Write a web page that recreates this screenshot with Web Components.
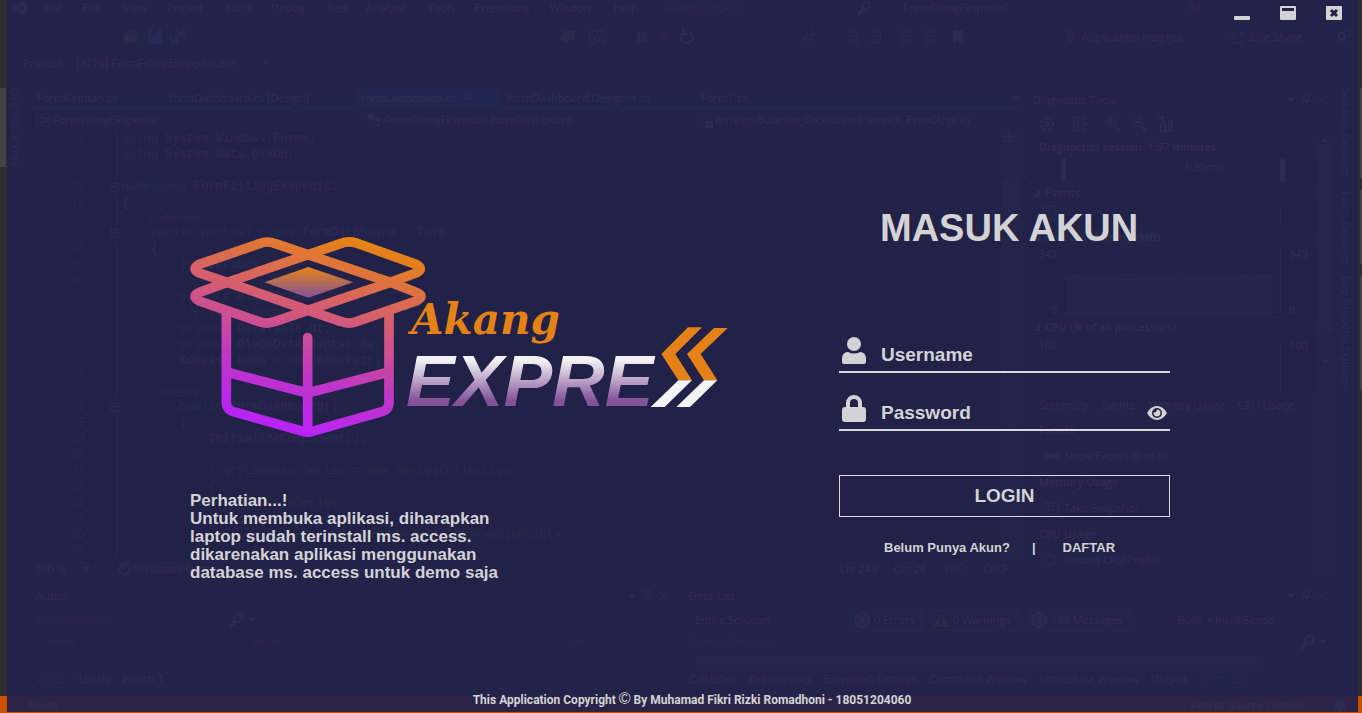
<!DOCTYPE html>
<html lang="id">
<head>
<meta charset="utf-8">
<title>Akang Express - Masuk Akun</title>
<style>
  html, body { margin: 0; height: 100%; background: #2d2d30; }
  body { overflow: hidden; font-family: "Liberation Sans", Arial, sans-serif; }
</style>
</head>
<body>
<desktop-scene>
  <ide-backdrop slot="back"></ide-backdrop>
  <login-window slot="front"></login-window>
</desktop-scene>

<script>
const define = (name, html, setup) => customElements.define(name, class extends HTMLElement {
  constructor() {
    super();
    this.attachShadow({ mode: "open" }).innerHTML = html;
    if (setup) setup.call(this, this.shadowRoot);
  }
});

/* Stacks the editor and the login window in one grid cell */
define("desktop-scene", `
<style>
  :host { display: grid; height: 100vh; grid-template: minmax(0, 1fr) / minmax(0, 1fr); overflow: hidden; }
  ::slotted(*) { grid-area: 1 / 1; }
  ::slotted([slot=front]) { margin: 0 4px 1px 7px; }
</style>
<slot name="back"></slot><slot name="front"></slot>`);

/* ---------- editor behind the window ---------- */
define("ide-rail", `
<style>
  :host { display: flex; flex-direction: column; gap: 12px; width: 24px; color: #d0d0d0; font-size: 12px; }
  ::slotted(span) { writing-mode: vertical-rl; border-left: 6px solid #434346; padding-left: 1px; height: var(--tab, 79px); line-height: 17px; white-space: nowrap; font-size: 11px; }
  :host([side=right]) ::slotted(span) { border-left: 0; border-right: 2px solid #434346; padding: 0 5px 0 0; }
</style><slot></slot>`);

define("ide-glyph", `
<style>
  :host { display: inline-block; width: 16px; height: 16px; flex: none; color: #c8c8c8; }
  svg { display: block; width: 100%; height: 100%; fill: none; stroke: currentColor; stroke-width: 2; }
</style><svg viewBox="0 0 16 16" aria-hidden="true"></svg>`, function (root) {
  const shapes = {
    open: '<path d="M1 5h5l2 2h6v7H1z" fill="#d7ac6a" stroke="none"/><path d="M4 5c1-4 5-4 7-1M11 1v4H7" stroke="#3a8fd8"/>',
    save: '<path d="M1 1h14v14H1z" fill="#55aaff" stroke="none"/><path d="M5 1h6v5H5z" fill="#2d2d30" stroke="none"/>',
    saveall: '<path d="M8 0h8v8H8zM1 7h8v8H1z" fill="#55aaff" stroke="none"/><path d="M10 0h3v3h-3zM3 7h3v3H3z" fill="#2d2d30" stroke="none"/>',
    logo: '<path d="M1 4l3 3 7-6 4 2v10l-4 2-7-6-3 3zM11 5L7 8l4 3z" fill="currentColor" fill-rule="evenodd" stroke="none"/>',
    search: '<circle cx="10" cy="6" r="4"/><path d="M7 9l-5 6" stroke-width="3"/>',
    folder: '<path d="M3 2h12v9H3z" fill="#d7ac6a" stroke="none"/><circle cx="5" cy="10" r="3"/>',
    home: '<path d="M1 2h14v12H1zM4 9l4-4 4 4M6 8v4h4V8" stroke-width="1"/>',
    pause: '<path d="M4 3v10M10 3v10" stroke="#55aaff" stroke-width="4"/>',
    stop: '<path d="M4 4h8v8H4z" fill="#a05050" stroke="none"/>',
    restart: '<path d="M5 3a6 6 0 1 0 6 0M4 0v5h5"/>',
    lines: '<path d="M2 3h12M5 7h9M5 11h9M2 14h12" stroke-width="1"/>',
    hash: '<path d="M6 1L3 15M12 1L9 15M4 5h11M1 10h12" stroke-width="1"/>',
    mark: '<path d="M3 1h10v14l-5-4-5 4z" fill="currentColor" stroke="none"/>',
    bulb: '<path d="M8 1a5 5 0 0 0-2 9v3h4v-3a5 5 0 0 0-2-9z" fill="#9b59d0" stroke="none"/>',
    share: '<path d="M5 5H2v9h10v-3M5 11c0-5 3-6 8-6M10 2l4 3-4 4" stroke-width="1"/>',
    user: '<circle cx="6" cy="7" r="3"/><path d="M1 15c1-6 9-6 10 0M8 1h7v6h-3" stroke-width="1"/>',
    down: '<path d="M4 6h8l-4 4z" fill="currentColor" stroke="none"/>',
    up: '<path d="M4 10h8L8 6z" fill="currentColor" stroke="none"/>',
    pin: '<path d="M5 2h5v7H5zM3 9h9M8 9v5" stroke-width="1"/>',
    close: '<path d="M3 3l9 9M12 3l-9 9" stroke-width="1"/>',
    cs: '<path d="M1 2h14v12H1z" stroke-width="1"/><path d="M7 6H4v4h3M9 5v6M12 5v6M8 7h6M8 9h6" stroke-width="1"/>',
    cls: '<path d="M5 1l5 4-5 4-5-4zM12 6l3 2-3 3-3-3zM12 11l3 2-3 2-3-2z" fill="currentColor" stroke="none"/>',
    cube: '<path d="M6 1l5 3v5l-5 3-5-3V4z" stroke="#9b59d0" stroke-width="1"/><path d="M10 10h5v5h-5z"/>',
    gear: '<circle cx="8" cy="8" r="6" stroke-dasharray="3 2"/><circle cx="8" cy="8" r="2"/>',
    exit: '<path d="M12 4V1H2v14h10v-3M5 5h5M5 8h5M5 11h5" stroke-width="1"/><path d="M11 4l5 4-5 4z" fill="#55aaff" stroke="none"/>',
    zoomin: '<circle cx="6" cy="6" r="5" stroke-width="1"/><path d="M3 6h6M6 3v6M10 10l5 5"/>',
    zoomout: '<circle cx="6" cy="6" r="5" stroke-width="1"/><path d="M3 6h6M10 10l5 5"/>',
    bars: '<path d="M1 1h5v6M4 8v7h11V5h-3v10M8 6v9"/>',
    ok: '<circle cx="8" cy="8" r="7" fill="#5faf5f" stroke="none"/><path d="M4 8l3 3 5-6" stroke="#222"/>',
    error: '<circle cx="8" cy="8" r="7" fill="#e0304a"/><path d="M5 5l6 6M11 5l-6 6"/>',
    warn: '<path d="M8 1l8 14H0z" fill="#e0b030" stroke="none"/><path d="M8 5v8" stroke="#111"/>',
    info: '<circle cx="8" cy="8" r="7" fill="#2d9bf0"/><path d="M8 4v8"/>',
    camera: '<path d="M1 3h14v11H1z" stroke-width="1"/><circle cx="8" cy="8" r="3" stroke-width="1"/>',
    dots: '<circle cx="3" cy="8" r="2"/><circle cx="8" cy="8" r="2"/><circle cx="13" cy="8" r="2"/>',
    ring: '<circle cx="8" cy="8" r="5" stroke-width="1"/>',
    pausebox: '<path d="M2 2h12v13H2zM8 2v13" stroke-width="1"/>',
    split: '<path d="M1 6h13M1 10h13M8 0v16" stroke-width="1"/>',
    tri: '<path d="M11 4v8H4z" fill="currentColor" stroke="none"/>',
    bell: '<path d="M1 12c3-2 2-5 3-8s7-3 8 0 0 6 3 8zM6 13h4v2H6z" fill="#d8e8f8" stroke="none"/>'
  };
  root.querySelector("svg").innerHTML = shapes[this.getAttribute("kind")] || "";
});

define("ide-menubar", `
<style>
  :host { display: grid; grid-template-rows: 15px 43px 10px; align-items: center; }
  div { display: grid; align-items: center; white-space: nowrap; }
  .menu { grid-template-columns: 32px 38px 41px 44px 58px 46px 56px 39px 62px 46px 76px 64px 50px 192px 47px 286px 88px; padding-left: 12px; line-height: 14px; }
  .dim { color: #909094; }
  .badge { color: #d050ff; font-size: 14px; }
  .tool { grid-template-columns: 24px 22px 391px 29px 46px 22px 22px 122px 44px 22px 30px 24px 29px 112px 20px 148px 20px 86px 16px; padding-left: 123px; }
  .proc { grid-template-columns: 53px 182px 16px; padding-left: 23px; line-height: 16px; }
</style>
<div class="menu"><ide-glyph kind="logo"></ide-glyph><span>File</span><span>Edit</span><span>View</span><span>Project</span><span>Build</span><span>Debug</span><span>Test</span><span>Analyze</span><span>Tools</span><span>Extensions</span><span>Window</span><span>Help</span><span class="dim">Search (Ctrl+Q)</span><ide-glyph kind="search"></ide-glyph><span>FormFillingEkspedisi</span><span class="badge">M</span></div>
<div class="tool"></div>
<div class="proc"><span>Process:</span><span>[3176] FormFillingEkspedisi.exe</span><ide-glyph kind="down"></ide-glyph></div>`, function (root) {
  root.querySelector(".tool").innerHTML = ["open", "save", "saveall", "folder", "home", "pause", "stop", "restart", "hash", "lines", "lines", "lines", "lines", "mark", "bulb"]
    .map(k => `<ide-glyph kind="${k}"></ide-glyph>`).join("") + `<span>Application Insights</span><ide-glyph kind="share"></ide-glyph><span>Live Share</span><ide-glyph kind="user"></ide-glyph>`;
});

define("ide-editor", `
<style>
  :host { display: grid; grid-template-rows: 19px 2px 22px minmax(0, 1fr) 16px; background: #1e1e1e; min-width: 0; }
  .row { display: grid; align-items: center; white-space: nowrap; min-width: 0; background: #2d2d30; }
  .tabs { grid-template-columns: 132px 189px 146px 197px 306px 16px; padding-left: 5px; }
  .active { display: flex; align-items: center; gap: 4px; background: #007acc; height: 19px; padding-left: 3px; margin-right: 4px; overflow: hidden; }
  .line { background: #007acc; }
  .nav { grid-template-columns: 18px 313px 18px 313px 18px 315px; padding-left: 3px; }
  .body { display: grid; grid-template-columns: minmax(0, 1fr) 20px; overflow: hidden; padding-left: 17px; }
  .code { font: 12px/16px "Liberation Mono", monospace; display: grid; grid-template-columns: 36px 34px auto; align-content: start; justify-content: start; white-space: pre; }
  .n { color: #2b91af; text-align: right; }
  .r { font: 10px/14px "Open Sans", sans-serif; color: #8a8a8a; padding-left: 28px; }
  .fold { justify-self: end; width: 2px; border-left: 1px solid #a5a5a5; }
  .box { justify-self: end; align-self: center; width: 7px; height: 7px; border: 1px solid #a5a5a5; line-height: 7px; text-align: center; }
  .c { padding-left: 3px; color: #c8c8c8; }
  b { font-weight: 400; color: #569cd6; } i { font-style: normal; color: #6aae5a; }
  .scroll { background: #3e3e42; display: grid; grid-template-rows: 16px 32px 32px; }
  .scroll span { background: #686868; grid-row: 3; }
  .status { grid-template-columns: 44px 38px 16px minmax(0, 1fr) 54px 50px 39px 38px; padding-left: 3px; }
</style>
<div class="row tabs"><span>FormKiriman.cs</span><span>formDashboard.cs [Design]</span><span class="active">formDashboard.cs <ide-glyph kind="pin"></ide-glyph><ide-glyph kind="close"></ide-glyph></span><span>&nbsp;formDashboard.Designer.cs</span><span>Form1.cs</span><ide-glyph kind="down"></ide-glyph></div>
<div class="line"></div>
<div class="row nav"><ide-glyph kind="cs"></ide-glyph><span>FormFillingEkspedisi</span><ide-glyph kind="cls"></ide-glyph><span>FormFillingEkspedisi.formDashboard</span><ide-glyph kind="cube"></ide-glyph><span>btnViewBulanan_Click(object sender, EventArgs e)</span></div>
<div class="body"><div class="code"></div><div class="scroll"><ide-glyph kind="split"></ide-glyph><span></span></div></div>
<div class="row status"><span>100 %</span><ide-glyph kind="down"></ide-glyph><ide-glyph kind="ok"></ide-glyph><span>No issues found</span><span>Ln: 243</span><span>Ch: 26</span><span>SPC</span><span>CRLF</span></div>`, function (root) {
  const lines = [
    [12, "<b>using</b> System.Windows.Forms;"], [13, "<b>using</b> System.Data.OleDb;"], [14, ""],
    [15, "<b>namespace</b> FormFillingEkspedisi", 1], [16, "{"], ["r", "3 references"],
    [17, "    <b>public partial class</b> formDashboard : Form", 1], [18, "    {"],
    [19, "        <b>int</b> periode = 30;"], [20, ""],
    [21, "        <b>private</b> OleDbCommand cmd;"], [22, "        <i>//private DataSet ds;</i>"],
    [23, "        <b>private</b> DataTable dt;"], [24, "        <b>private</b> OleDbDataAdapter da;"],
    [25, "        Koneksi konn = <b>new</b> Koneksi();"], [26, ""], ["r", "1 reference"],
    [27, "        <b>public</b> formDashboard()", 1], [28, "        {"], [29, "            InitializeComponent();"],
    [30, ""], [31, "           <i>/* grfLayanan.Series = new SeriesCollection</i>"], [32, "            <i>{</i>"],
    [33, "                <i>new LineSeries</i>"], [34, "                <i>{</i>"],
    [35, "                    <i>Values = new ChartValues&lt;ObservablePoint&gt;</i>"], [36, "                    <i>{</i>"]
  ];
  root.querySelector(".code").innerHTML = lines.map(([n, t, box]) => n === "r"
    ? `<span></span><span class="fold"></span><span class="r">${t}</span>`
    : `<span class="n">${n}</span>${box ? '<span class="box">-</span>' : '<span class="fold"></span>'}<span class="c">${t}</span>`).join("");
});

define("ide-diagnostics", `
<style>
  :host { display: grid; grid-template-columns: 288px 16px; grid-template-rows: 24px 24px minmax(0, 1fr); background: #252526; min-width: 0; white-space: nowrap; }
  .head, .tools { grid-column: 1 / 3; display: flex; align-items: center; padding-left: 4px; background: #2d2d30; }
  .head span { flex: 1; }
  .head { padding-right: 2px; }
  .tools { gap: 10px; padding-left: 10px; } .tools .x { margin-left: 7px; }
  .main { display: grid; grid-template-rows: 22px 24px 22px 24px 18px 71px 20px 56px 24px; align-content: start; }
  h4 { margin: 0; font-size: 11px; font-weight: 600; line-height: 22px; display: flex; align-items: center; }
  h4.top { padding-left: 10px; }
  .ruler { display: grid; grid-template-columns: 5px 115px 99px 5px; padding-left: 32px; border-top: 1px solid #3f3f46; border-bottom: 1px solid #3f3f46; background: #1e1e1e; }
  .ruler i { background: #d0d0d0; } .ruler span:nth-of-type(1) { border-right: 1px solid #3f3f46; }
  .plot { display: grid; grid-template-columns: 28px 216px 26px; gap: 8px; background: #1e1e1e; }
  .plot > div { border: 1px solid #46464c; }
  .plot p { margin: 0; display: flex; flex-direction: column; justify-content: space-between; text-align: right; line-height: 15px; } .plot p:last-child { text-align: left; }
  .plot ide-glyph { align-self: end; }
  svg { display: block; width: 206px; height: 100%; }
  .tabs { display: flex; gap: 13px; padding-left: 10px; align-items: center; }
  .item { display: grid; grid-template-columns: 21px auto; align-items: center; justify-content: start; padding-left: 14px; line-height: 16px; }
  .list { display: grid; grid-auto-rows: 26px; align-items: center; }
  .bar { background: #3e3e42; display: grid; grid-template-rows: 8px 188px 60px; } .bar i { background: #686868; }
  .bar ide-glyph { align-self: center; }
</style>
<div class="head"><span>Diagnostic Tools</span><ide-glyph kind="down"></ide-glyph><ide-glyph kind="pin"></ide-glyph><ide-glyph kind="close"></ide-glyph></div>
<div class="tools"><ide-glyph kind="gear"></ide-glyph><ide-glyph class="x" kind="exit"></ide-glyph><ide-glyph class="x" kind="zoomin"></ide-glyph><ide-glyph kind="zoomout"></ide-glyph><ide-glyph kind="bars"></ide-glyph></div>
<div class="main">
  <h4 class="top">Diagnostics session: 1:37 minutes</h4>
  <div class="ruler"><i></i><span></span><span>&nbsp;1:30min</span><i></i></div>
  <h4><ide-glyph kind="tri"></ide-glyph>Events</h4>
  <div class="plot"><p><ide-glyph kind="pausebox"></ide-glyph></p><div></div><p></p></div>
  <h4><ide-glyph kind="tri"></ide-glyph>Process Memory (MB)</h4>
  <div class="plot"><p><span>349</span><span>0</span></p><div><svg viewBox="0 0 206 69" preserveAspectRatio="none"><path d="M0 28l118-2 4 3 84-1v41H0z" fill="#3b5b7b"/></svg></div><p><span>349</span><span>0</span></p></div>
  <h4><ide-glyph kind="tri"></ide-glyph>CPU (% of all processors)</h4>
  <div class="plot"><p><span>100</span></p><div></div><p><span>100</span></p></div>
  <div class="tabs"><span>Summary</span><span>Events</span><span>Memory Usage</span><span>CPU Usage</span></div>
  <div class="list">
    <h4 class="top">Events</h4><div class="item"><ide-glyph kind="dots"></ide-glyph>Show Events (0 of 0)</div>
    <h4 class="top">Memory Usage</h4><div class="item"><ide-glyph kind="camera"></ide-glyph>Take Snapshot</div>
    <h4 class="top">CPU Usage</h4><div class="item"><ide-glyph kind="ring"></ide-glyph>Record CPU Profile</div>
  </div>
</div>
<div class="bar"><ide-glyph kind="up"></ide-glyph><i></i><ide-glyph kind="down"></ide-glyph></div>`);

define("ide-panels", `
<style>
  :host { display: grid; grid-template-columns: 640px minmax(0, 1fr); gap: 12px; padding: 0 31px 0 32px; white-space: nowrap; }
  section { display: grid; grid-template-rows: 24px 24px 20px 16px 22px; align-items: center; background: #252526; min-width: 0; }
  .head { display: flex; padding-left: 4px; } .head span { flex: 1; }
  .dim { color: #909094; }
  .find { display: flex; align-items: center; padding-left: 5px; } .find span { width: 191px; }
  .find span.wide { flex: 1; }
  .cols { display: grid; grid-template-columns: 206px 309px auto; padding-left: 14px; color: #909094; background: #1e1e1e; }
  .tabs { display: flex; gap: 12px; padding-left: 5px; } .tabs .on { color: #0097fb; }
  .filter { display: grid; grid-template-columns: 148px 71px 90px 104px 100px; gap: 8px; align-items: center; padding-left: 11px; }
  .filter > :last-child { padding-left: 37px; }
  .chip { display: flex; align-items: center; gap: 4px; border: 1px solid #3a78c0; padding: 0 2px; height: 19px; }
  .track { height: 9px; background: #686868; margin: 0 68px 0 12px; }
</style>
<section><div class="head"><span>Autos</span><ide-glyph kind="down"></ide-glyph><ide-glyph kind="pin"></ide-glyph><ide-glyph kind="close"></ide-glyph></div>
  <div class="find dim"><span>Search (Ctrl+E)</span><ide-glyph kind="search"></ide-glyph><ide-glyph kind="down"></ide-glyph></div>
  <div class="cols"><span>Name</span><span>Value</span><span>Type</span></div><div></div>
  <div class="tabs"><span class="on">Autos</span><span>Locals</span><span>Watch 1</span></div></section>
<section><div class="head"><span>Error List</span><ide-glyph kind="down"></ide-glyph><ide-glyph kind="pin"></ide-glyph><ide-glyph kind="close"></ide-glyph></div>
  <div class="filter"><span>Entire Solution</span><span class="chip"><ide-glyph kind="error"></ide-glyph>0 Errors</span><span class="chip"><ide-glyph kind="warn"></ide-glyph>0 Warnings</span><span class="chip"><ide-glyph kind="info"></ide-glyph>188 Messages</span><span>Build + IntelliSense</span></div>
  <div class="find dim"><span class="wide">Search Error List</span><ide-glyph kind="search"></ide-glyph><ide-glyph kind="down"></ide-glyph></div><div class="track"></div>
  <div class="tabs"><span>Call Stack</span><span>Breakpoints</span><span>Exception Settings</span><span>Command Window</span><span>Immediate Window</span><span>Output</span><span class="on">Error List</span></div></section>`);

define("ide-backdrop", `
<style>
  :host { display: grid; grid-template-rows: 88px minmax(0, 1fr) 7px 106px 23px; font: 11px/16px "Open Sans", sans-serif; color: #f1f1f1; background: #2d2d30; min-height: 0; min-width: 0; overflow: hidden; user-select: none; }
  .mid { display: grid; grid-template-columns: 32px minmax(0, 1fr) 304px 29px; min-height: 0; }
  ide-editor { margin-right: 8px; } ide-rail[side=right] { justify-self: end; }
  .state { display: flex; align-items: start; background: #ca5100; color: #fff; padding: 1px 14px 0 28px; margin-top: 6px; overflow: hidden; line-height: 15px; }
  .state span { flex: 1; } .state ide-glyph { margin-left: 28px; }
</style>
<ide-menubar></ide-menubar>
<div class="mid">
  <ide-rail><span>Live Visual Tree</span></ide-rail>
  <ide-editor></ide-editor>
  <ide-diagnostics></ide-diagnostics>
  <ide-rail side="right"><span style="--tab:90px">Solution Explorer</span><span style="--tab:74px">Team Explorer</span><span style="--tab:115px">Live Property Explorer</span></ide-rail>
</div>
<div></div>
<ide-panels></ide-panels>
<div class="state"><span>Ready</span>Add to Source Control<ide-glyph kind="bell"></ide-glyph></div>`);

/* ---------- login window ---------- */
define("window-controls", `
<style>
  :host { display: flex; justify-content: flex-end; gap: 30px; padding: 5px 16px 0 0; height: 17px; }
  button { all: unset; width: 16px; height: 16px; cursor: pointer; }
  svg { display: block; fill: #d3d3d5; }
</style>
<button aria-label="Minimize"><svg width="16" height="16"><rect y="11" width="16" height="4" rx="1"/></svg></button>
<button aria-label="Maximize"><svg width="16" height="16"><path fill-rule="evenodd" d="M1 1h14q1 0 1 1v12q0 1-1 1H1q-1 0-1-1V2q0-1 1-1zM2 3v3h12V3z"/></svg></button>
<button aria-label="Close"><svg width="16" height="16"><rect y="1" width="16" height="14" rx="1"/><path d="M5 5l6 6M11 5l-6 6" stroke="#232249" stroke-width="3"/></svg></button>`);

define("brand-logo", `
<style>
  :host { display: block; width: 542px; }
  svg { display: block; width: 100%; }
</style>
<svg viewBox="188 234 542 206" role="img" aria-label="Akang Express">
  <defs>
    <linearGradient id="box" gradientUnits="userSpaceOnUse" x1="520" y1="50" x2="370" y2="640"><stop offset="0" stop-color="#e68414"/><stop offset=".42" stop-color="#d3587d"/><stop offset=".72" stop-color="#bf36c8"/><stop offset="1" stop-color="#b822f8"/></linearGradient>
    <linearGradient id="gem" x1="0" y1="0" x2="0" y2="1"><stop offset="0" stop-color="#e68414"/><stop offset="1" stop-color="#83529c"/></linearGradient>
    <linearGradient id="word" gradientUnits="userSpaceOnUse" x1="0" y1="354" x2="0" y2="406"><stop offset=".12" stop-color="#f2f2f4"/><stop offset=".9" stop-color="#83529a"/></linearGradient>
  </defs>
  <g transform="translate(170 220) scale(.33333)">
    <g fill="none" stroke="url(#box)" stroke-width="29" stroke-linecap="round" stroke-linejoin="round">
      <path d="M172 187L88 159Q62 147 88 133L268 71Q292 61 316 71L661 187L738 217Q768 229 738 243L559 305Q535 314 511 304L172 187z"/>
      <path d="M661 187L738 159Q764 147 738 133L559 69Q535 61 511 71L172 187L88 217Q62 229 88 243L268 305Q292 314 316 304L661 187z"/>
      <path stroke-linecap="butt" d="M169 275V548Q169 568 190 575L399 634Q413 639 427 634L636 575Q657 568 657 548V275M169 456L413 519L657 456"/>
      <path d="M413 353V630"/>
    </g>
    <path d="M283 187L415 141L550 187L415 233z" fill="url(#gem)"/>
  </g>
  <text x="411" y="334" font-family="DejaVu Serif, serif" font-weight="700" font-style="italic" font-size="42" fill="#e48218">Akang</text>
  <text x="406" y="406" font-family="Liberation Sans, Arial, sans-serif" font-weight="700" font-style="italic" font-size="73" fill="url(#word)">EXPRE</text>
  <g transform="translate(390 290) scale(.33333)">
    <path fill="#e48218" d="M894 112H936L856 192L906 271H865L814 192zM972 114H1013L932 192L982 271H942L891 192z"/>
    <path fill="#f3f3f3" d="M865 271H906L824 351H782zM942 271H982L900 351H859z"/>
  </g>
</svg>`);

define("form-field", `
<style>
  :host { display: flex; align-items: flex-end; height: 35px; border-bottom: 2px solid #d9d9db; padding: 0 3px 0 3px; color: #d3d3d5; }
  ::slotted(label) { display: block; width: 24px; height: 34px; margin-right: 15px; }
  ::slotted(input) { flex: 1; min-width: 0; height: 32px; padding: 0; border: 0; outline: 0; background: none; color: inherit; font: 700 19px/32px "Liberation Sans", Arial, sans-serif; }
</style><slot></slot>`);

define("login-form", `
<style>
  :host { display: block; width: 331px; color: #d3d3d5; }
  h1 { margin: 0 0 88px 41px; font-size: 38px; line-height: 40px; font-weight: 700; white-space: nowrap; }
  form { display: grid; }
  form-field + form-field { margin-top: 21px; }
  input::placeholder { color: #d3d3d5; opacity: 1; }
  svg { display: block; fill: #d3d3d5; }
  .eye { all: unset; width: 20px; height: 32px; display: grid; align-items: center; cursor: pointer; }
  .login { margin-top: 44px; height: 42px; border: 1px solid #d9d9db; background: none; color: inherit; font: 700 19px/38px "Liberation Sans", Arial, sans-serif; padding: 0; cursor: pointer; }
  p { margin: 22px 0 0; padding-left: 45px; display: flex; gap: 22px; font-size: 13px; line-height: 18px; font-weight: 700; white-space: nowrap; }
  p i { font-style: normal; }
  a { color: inherit; text-decoration: none; margin-left: 5px; }
</style>
<h1>MASUK AKUN</h1>
<form>
  <form-field><label for="user" aria-label="Username"><svg width="24" height="28" viewBox="0 0 24 28"><circle cx="12" cy="7" r="7"/><path d="M6 15q6 3 12 0c4 0 6 3 6 7v3q0 2-2 2H2q-2 0-2-2v-3c0-4 2-7 6-7z"/></svg></label><input id="user" type="text" placeholder="Username"></form-field>
  <form-field><label for="pass" aria-label="Password"><svg width="24" height="28" viewBox="0 0 24 28"><path fill-rule="evenodd" d="M4 12V8a8 8 0 0 1 16 0v4h1q3 0 3 3v9q0 3-3 3H3q-3 0-3-3v-9q0-3 3-3zm4 0h8V8a4 4 0 0 0-8 0z"/></svg></label><input id="pass" type="password" placeholder="Password"><button type="button" class="eye" aria-label="Tampilkan password"><svg width="20" height="14" viewBox="0 0 20 14"><path d="M0 7q4-7 10-7t10 7q-4 7-10 7T0 7z"/><circle cx="10" cy="7" r="5" fill="#232249"/><path d="M10 3.500a3.500 3.500 0 1 1-3.400 2.700q2.700.8 3.400-2.700z"/></svg></button></form-field>
  <button type="button" class="login">LOGIN</button>
</form>
<p><span>Belum Punya Akun?</span><i>|</i><a href="#daftar">DAFTAR</a></p>`);

define("login-window", `
<style>
  :host { display: grid; grid-template-rows: 22px minmax(0, 1fr) 20px; background: rgba(35, 34, 74, .95); color: #d3d3d5; min-width: 0; min-height: 0; }
  main { display: flex; justify-content: space-between; align-items: flex-start; padding: 186px 188px 0 181px; }
  .left { padding-top: 26px; }
  .note { margin: 52px 0 0 2px; font-size: 17px; line-height: 18px; font-weight: 700; white-space: nowrap; }
  footer { padding-left: 19px; text-align: center; font: 700 12px/16px Roboto, "Liberation Sans", sans-serif; }
  footer span { font: 400 16px/12px "Liberation Sans", Arial, sans-serif; }
</style>
<window-controls></window-controls>
<main>
  <div class="left">
    <brand-logo></brand-logo>
    <p class="note">Perhatian...!<br>Untuk membuka aplikasi, diharapkan<br>laptop sudah terinstall ms. access.<br>dikarenakan aplikasi menggunakan<br>database ms. access untuk demo saja</p>
  </div>
  <login-form></login-form>
</main>
<footer>This Application Copyright <span>©</span> By Muhamad Fikri Rizki Romadhoni - 18051204060</footer>`);
</script>
</body>
</html>
